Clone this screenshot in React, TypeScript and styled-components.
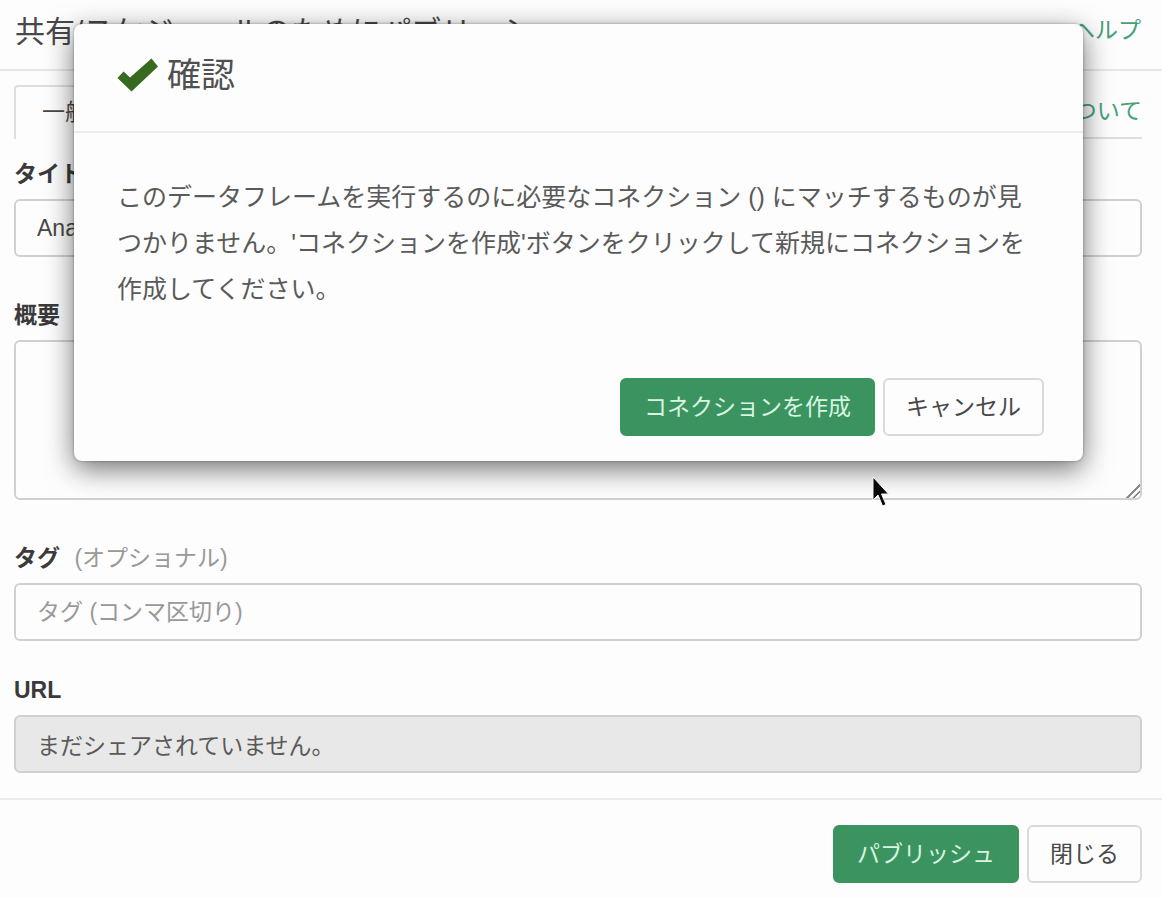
import React from "react";
import styled, { createGlobalStyle, css } from "styled-components";

const GlobalStyle = createGlobalStyle`
  * { box-sizing: border-box; }
  body {
    margin: 0;
    background: #fdfdfd;
    color: #484848;
    font-family: "Liberation Sans", "Noto Sans CJK JP", sans-serif;
    font-size: 23px;
    line-height: 32px;
  }
  button, input, textarea { font: inherit; color: inherit; }
`;

const Page = styled.div`
  position: relative;
`;

const Header = styled.header`
  display: flex;
  align-items: center;
  justify-content: space-between;
  height: 71px;
  padding: 0 21px 10px 15px;
  border-bottom: 2px solid #e6e6e6;
`;

const Title = styled.h1`
  margin: 0;
  padding-top: 4px;
  font-size: 30px;
  font-weight: 400;
  line-height: 40px;
  white-space: nowrap;
`;

const Link = styled.a`
  color: #46a07a;
  text-decoration: none;
  white-space: nowrap;
`;

const Body = styled.main`
  padding: 14px 20px 0 14px;
`;

const Tabs = styled.nav`
  display: flex;
  align-items: flex-end;
  justify-content: space-between;
  height: 54px;
  border-bottom: 2px solid #dedede;
`;

const Tab = styled.button`
  height: 54px;
  margin-bottom: -2px;
  padding: 0 26px 2px;
  border: 2px solid #dedede;
  border-bottom: 0;
  border-radius: 4px 4px 0 0;
  background: #fdfdfd;
`;

const TabLink = styled(Link)`
  padding-bottom: 10px;
`;

const Field = styled.div<{ $gap: number }>`
  display: flex;
  flex-direction: column;
  padding-top: ${(p) => p.$gap}px;
`;

const Label = styled.label`
  margin-bottom: 9px;
  color: #3a3a3a;
  font-weight: 700;
`;

const Optional = styled.span`
  margin-left: 8px;
  color: #999;
  font-weight: 400;
`;

const control = css`
  width: 100%;
  border: 2px solid #d0d0d0;
  border-radius: 6px;
  background: #fdfdfd;
  outline: 0;
`;

const TextInput = styled.input`
  ${control}
  height: 58px;
  padding: 0 21px;
  &::placeholder { color: #999; opacity: 1; }
  &:read-only { background: #e8e8e8; color: #5a5a5a; }
`;

const TextArea = styled.textarea`
  ${control}
  height: 160px;
  padding: 10px 21px;
  resize: vertical;
  &::-webkit-resizer {
    background: linear-gradient(
      135deg,
      transparent 52%,
      #8a8a8a 53% 60%,
      transparent 61% 73%,
      #8a8a8a 74% 81%,
      transparent 82%
    );
  }
`;

const Actions = styled.div`
  display: flex;
  justify-content: flex-end;
  gap: 8px;
`;

const Footer = styled.footer`
  margin-top: 25px;
  padding: 25px 20px 15px;
  border-top: 2px solid #ececec;
`;

const Button = styled.button<{ $primary?: boolean }>`
  height: 58px;
  padding: 0 ${(p) => (p.$primary ? 22 : 21)}px;
  border: 2px solid ${(p) => (p.$primary ? "#3b945f" : "#dadada")};
  border-radius: 6px;
  background: ${(p) => (p.$primary ? "#3b945f" : "#fdfdfd")};
  color: ${(p) => (p.$primary ? "#d8f5e2" : "#484848")};
  white-space: nowrap;
`;

const Overlay = styled.div`
  position: absolute;
  inset: 0;
  padding: 24px 79px 0 74px;
`;

const Dialog = styled.section`
  border-radius: 8px;
  background: #fdfdfd;
  box-shadow: 0 8px 28px rgba(0, 0, 0, 0.55), 0 0 3px rgba(0, 0, 0, 0.35);
`;

const DialogHeader = styled.div`
  display: flex;
  align-items: center;
  gap: 8px;
  height: 109px;
  padding: 0 43px 6px;
  border-bottom: 2px solid #ececec;
`;

const DialogTitle = styled.h2`
  margin: 0;
  color: #505050;
  font-size: 34px;
  font-weight: 400;
  line-height: 48px;
`;

const Message = styled.p`
  margin: 0;
  padding: 41px 43px 0;
  color: #5a5a5a;
  font-size: 25px;
  line-height: 46px;
`;

const DialogActions = styled(Actions)`
  padding: 66px 39px 25px;
`;

const Pointer = styled.svg`
  position: absolute;
  top: 474px;
  left: 869px;
  pointer-events: none;
`;

function CheckMark() {
  return (
    <svg width="42" height="36" viewBox="0 0 42 36" aria-hidden="true">
      <path d="M0.5 21 L6.5 14.5 L13 20.5 L34.5 1.5 L41 9.5 L14.5 34.5 Z" fill="#37691f" />
    </svg>
  );
}

export default function App() {
  return (
    <Page>
      <GlobalStyle />
      <Header>
        <Title>共有/スケジュールのためにパブリッシュ</Title>
        <Link href="#help">ヘルプ</Link>
      </Header>
      <Body>
        <Tabs>
          <Tab type="button">一般</Tab>
          <TabLink href="#about">について</TabLink>
        </Tabs>
        <Field $gap={19}>
          <Label htmlFor="title">タイトル</Label>
          <TextInput id="title" type="text" defaultValue="Analytics" />
        </Field>
        <Field $gap={42}>
          <Label htmlFor="summary">概要</Label>
          <TextArea id="summary" />
        </Field>
        <Field $gap={42}>
          <Label htmlFor="tags">
            タグ <Optional>(オプショナル)</Optional>
          </Label>
          <TextInput id="tags" type="text" placeholder="タグ (コンマ区切り)" />
        </Field>
        <Field $gap={33}>
          <Label htmlFor="url">URL</Label>
          <TextInput id="url" type="text" readOnly value="まだシェアされていません。" />
        </Field>
      </Body>
      <Footer>
        <Actions>
          <Button type="button" $primary>パブリッシュ</Button>
          <Button type="button">閉じる</Button>
        </Actions>
      </Footer>
      <Overlay>
        <Dialog role="dialog" aria-labelledby="confirm-title">
          <DialogHeader>
            <CheckMark />
            <DialogTitle id="confirm-title">確認</DialogTitle>
          </DialogHeader>
          <Message>
            このデータフレームを実行するのに必要なコネクション () にマッチするものが見つかりません。'コネクションを作成'ボタンをクリックして新規にコネクションを作成してください。
          </Message>
          <DialogActions>
            <Button type="button" $primary>コネクションを作成</Button>
            <Button type="button">キャンセル</Button>
          </DialogActions>
        </Dialog>
      </Overlay>
      <Pointer width="24" height="36" viewBox="0 0 24 36" aria-hidden="true">
        <path
          d="M4 3 L4 26 L9 21 L13.5 32 L17 30.5 L12.5 20 L19.5 20 Z"
          fill="#0a0a0a"
          stroke="#f4f4f4"
          strokeWidth="1"
        />
      </Pointer>
    </Page>
  );
}
